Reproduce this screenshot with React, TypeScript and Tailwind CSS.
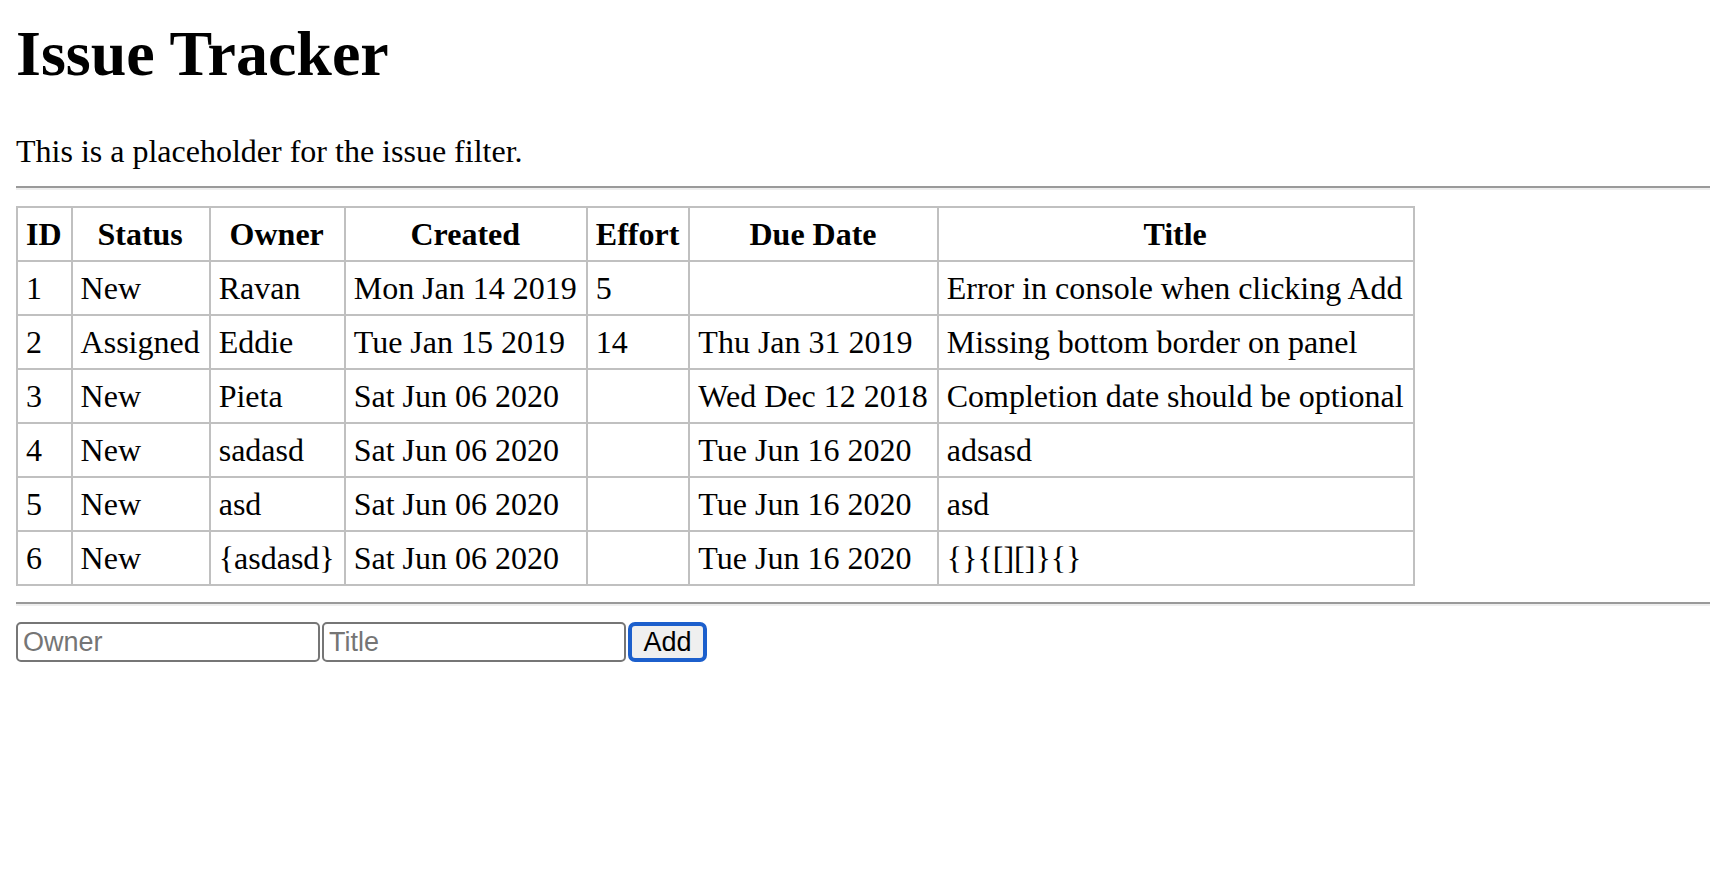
const issues = [
  { id: 1, status: "New", owner: "Ravan", created: "Mon Jan 14 2019", effort: "5", due: "", title: "Error in console when clicking Add" },
  { id: 2, status: "Assigned", owner: "Eddie", created: "Tue Jan 15 2019", effort: "14", due: "Thu Jan 31 2019", title: "Missing bottom border on panel" },
  { id: 3, status: "New", owner: "Pieta", created: "Sat Jun 06 2020", effort: "", due: "Wed Dec 12 2018", title: "Completion date should be optional" },
  { id: 4, status: "New", owner: "sadasd", created: "Sat Jun 06 2020", effort: "", due: "Tue Jun 16 2020", title: "adsasd" },
  { id: 5, status: "New", owner: "asd", created: "Sat Jun 06 2020", effort: "", due: "Tue Jun 16 2020", title: "asd" },
  { id: 6, status: "New", owner: "{asdasd}", created: "Sat Jun 06 2020", effort: "", due: "Tue Jun 16 2020", title: "{}{[][]}{}" },
];

const headers = ["ID", "Status", "Owner", "Created", "Effort", "Due Date", "Title"];

function Rule() {
  return <div className="my-4 h-0 border-t-2 border-b-2 border-t-[#9a9a9a] border-b-[#eeeeee]" />;
}

export default function App() {
  return (
    <div className="min-h-screen bg-white pl-4 pt-[17px] text-black font-['Liberation_Serif','Times_New_Roman',serif]">
      <h1 className="text-[64px] font-bold leading-[73px]">Issue Tracker</h1>
      <div className="mt-[43px] text-[32px] leading-[37px]">This is a placeholder for the issue filter.</div>
      <Rule />
      <table className="border-collapse border-2 border-[#c0c0c0] text-[32px] leading-[36px]">
        <thead>
          <tr>
            {headers.map((h) => (
              <th key={h} className="border-2 border-[#c0c0c0] py-2 pl-2 pr-[9px] text-center font-bold">
                {h}
              </th>
            ))}
          </tr>
        </thead>
        <tbody>
          {issues.map((i) => (
            <tr key={i.id}>
              <td className="border-2 border-[#c0c0c0] py-2 pl-2 pr-[9px]">{i.id}</td>
              <td className="border-2 border-[#c0c0c0] py-2 pl-2 pr-[9px]">{i.status}</td>
              <td className="border-2 border-[#c0c0c0] py-2 pl-2 pr-[9px]">{i.owner}</td>
              <td className="border-2 border-[#c0c0c0] py-2 pl-2 pr-[9px]">{i.created}</td>
              <td className="border-2 border-[#c0c0c0] py-2 pl-2 pr-[9px]">{i.effort}</td>
              <td className="border-2 border-[#c0c0c0] py-2 pl-2 pr-[9px]">{i.due}</td>
              <td className="border-2 border-[#c0c0c0] py-2 pl-2 pr-[9px]">{i.title}</td>
            </tr>
          ))}
        </tbody>
      </table>
      <Rule />
      <form className="mt-[16px] flex items-center gap-[2px] font-['Liberation_Sans',Arial,sans-serif] text-[27px]">
        <input
          name="owner"
          placeholder="Owner"
          className="h-10 w-[304px] rounded-[5px] border-2 border-[#767676] px-[5px] text-black placeholder:text-[#757575] outline-none"
        />
        <input
          name="title"
          placeholder="Title"
          className="h-10 w-[304px] rounded-[5px] border-2 border-[#767676] px-[5px] text-black placeholder:text-[#757575] outline-none"
        />
        <button
          type="button"
          className="h-10 w-[79px] rounded-[7px] border-4 border-[#1c5fcc] bg-[#efefef] text-black leading-none"
        >
          Add
        </button>
      </form>
    </div>
  );
}
